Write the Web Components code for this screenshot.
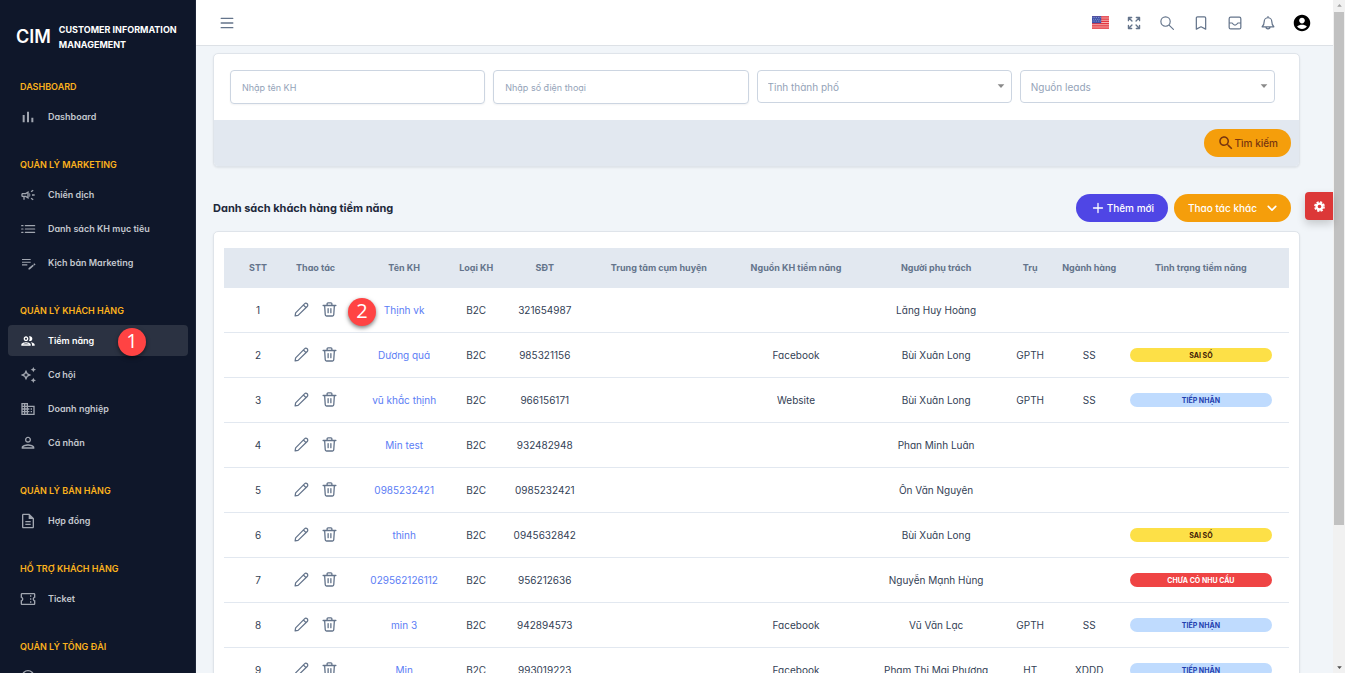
<!DOCTYPE html>
<html lang="vi">
<head>
<meta charset="utf-8">
<title>CIM - Khách hàng tiềm năng</title>
<style>
  body { margin: 0; font-family: Inter, "Open Sans", sans-serif; font-size: 10px; font-feature-settings: "cv11"; color: #334155; background: #f1f5f9; }
</style>
</head>
<body>
<cim-app></cim-app>
<script>
const fill = d => `<path fill="currentColor" fill-rule="evenodd" d="${d}"/>`;
const line = (d, w = 1.8) => `<path fill="none" stroke="currentColor" stroke-width="${w}" stroke-linecap="round" stroke-linejoin="round" d="${d}"/>`;
const ICONS = {
  bars: fill('M4 9h3v11H4zM17 13h3v7h-3zM10.500 4h3v16h-3z'),
  campaign: fill('M18 11v2h4v-2h-4zm-2 6.610c.96.71 2.210 1.650 3.200 2.390.4-.53.8-1.070 1.200-1.600-.99-.74-2.240-1.680-3.200-2.400-.4.54-.8 1.080-1.200 1.610zM20.400 5.600c-.4-.53-.8-1.070-1.200-1.600-.99.74-2.240 1.680-3.200 2.400.4.530.8 1.070 1.200 1.600.96-.72 2.210-1.650 3.200-2.400zM4 9c-1.100 0-2 .9-2 2v2c0 1.100.9 2 2 2h1v4h2v-4h1l5 3V6L8 9H4zm5.030 1.710L11 9.530v4.940l-1.970-1.180-.48-.29H4v-2h4.550l.48-.29zM15.500 12c0-1.330-.58-2.530-1.500-3.350v6.690c.92-.81 1.500-2.010 1.500-3.340z'),
  list: line('M8 7h14M8 12h14M8 17h14M2.500 7h2M2.500 12h2M2.500 17h2', 1.8),
  note: fill('M3 10h13v1.600H3zM3 6h13v1.600H3zM3 14h8v1.600H3zM21.400 12.200l1.900 1.900-1.500 1.500-1.900-1.900zM19 14.500l-6.300 5.400V21.800h1.900l6.300-5.500z'),
  people: fill('M9 13.750c-2.340 0-7 1.170-7 3.500V19h14v-1.750c0-2.330-4.660-3.500-7-3.500zM4.340 17c.84-.58 2.870-1.250 4.660-1.250s3.820.67 4.660 1.250H4.340zM9 12c1.930 0 3.500-1.570 3.500-3.500S10.930 5 9 5 5.500 6.570 5.500 8.500 7.070 12 9 12zm0-5c.83 0 1.500.67 1.500 1.500S9.830 10 9 10s-1.500-.67-1.500-1.500S8.170 7 9 7zm7.040 6.810c1.160.84 1.960 1.960 1.960 3.440V19h4v-1.750c0-2.020-3.500-3.170-5.960-3.440zM15 12c1.930 0 3.500-1.570 3.500-3.500S16.930 5 15 5c-.54 0-1.040.13-1.500.35.63.89 1 1.980 1 3.150s-.37 2.260-1 3.150c.46.22.96.35 1.500.35z'),
  sparkle: fill('M20 8l1.250-2.750L24 4l-2.750-1.250L20 0l-1.250 2.750L16 4l2.750 1.250zM20 16l-1.250 2.750L16 20l2.750 1.250L20 24l1.250-2.750L24 20l-2.750-1.250zM11.500 9.500L9 4 6.500 9.500 1 12l5.500 2.500L9 20l2.500-5.500L17 12zM9.990 12.990L9 15.170l-.99-2.180L5.830 12l2.180-.99L9 8.830l.99 2.180 2.180.99z'),
  building: fill('M12 7V3H2v18h20V7H12zM6 19H4v-2h2v2zm0-4H4v-2h2v2zm0-4H4V9h2v2zm0-4H4V5h2v2zm4 12H8v-2h2v2zm0-4H8v-2h2v2zm0-4H8V9h2v2zm0-4H8V5h2v2zm10 12h-8v-2h2v-2h-2v-2h2v-2h-2V9h8v10zm-2-8h-2v2h2v-2zm0 4h-2v2h2v-2z'),
  person: fill('M12 4.500c1.500 0 2.500 1 2.500 2.500s-1 2.500-2.500 2.500-2.500-1-2.500-2.500 1-2.500 2.500-2.500m0 11.500c3.500 0 6.800 1.200 7 2.500H5c.23-1.200 3.500-2.500 7-2.500m0-13.500C9.500 2.500 7.500 4.500 7.500 7s2 4.500 4.500 4.500 4.500-2 4.500-4.500-2-4.500-4.500-4.500zm0 11.500c-3.500 0-9.500 1.500-9.500 4.500v2h19v-2c0-3-6-4.500-9.500-4.500z'),
  doc: fill('M8 16h8v2H8zm0-4h8v2H8zm6-11H5c-1.100 0-2 .9-2 2v18c0 1.100.89 2 1.990 2H19c1.100 0 2-.9 2-2V8l-7-7zm5 20H5V3h8v6h6v12z'),
  ticket: fill('M23 10V5c0-1.110-.9-2-2-2H3c-1.100 0-1.990.89-1.990 2v5c1.100 0 1.990.9 1.990 2s-.89 2-2 2v5c0 1.100.9 2 2 2h18c1.100 0 2-.9 2-2v-5c-1.100 0-2-.9-2-2s.9-2 2-2zm-2-1.460c-1.190.69-2 1.990-2 3.460s.81 2.770 2 3.460V19H3v-3.540c1.190-.69 2-1.990 2-3.460 0-1.480-.8-2.770-1.990-3.460L3 5h18v3.540zM15 15.500h2v2h-2zm0-4.500h2v2h-2zm0-4.500h2v2h-2z'),
  headset: line('M3.500 16v-5a8.500 8.500 0 0 1 17 0v5M7 11a5.500 5.500 0 0 1 10 0M3 12v4h2v-4zM19 12v4h2v-4zM20 16c0 3-2 4.500-6 4.500', 2),
  menu: line('M2 4h20M2 12h20M2 20h20', 2.2),
  expand: line('M2.500 8V2.500h5.500M3 3l5.500 5.500M16 2.500h5.500v5.500M21 3l-5.500 5.500M2.500 16v5.500h5.500M3 21l5.500-5.500M21.500 16v5.500h-5.500M21 21l-5.500-5.500', 2.3),
  search: line('M23 23l-7.500-7.500M1.500 9.500a8 8 0 1 0 16 0a8 8 0 1 0-16 0', 2),
  bookmark: line('M4 22.500V3.500a2 2 0 0 1 2-2h12a2 2 0 0 1 2 2v19L12 18.500z', 2.1),
  inbox: line('M4.500 2h15a2.500 2.500 0 0 1 2.500 2.500v15a2.500 2.500 0 0 1-2.500 2.500h-15A2.500 2.500 0 0 1 2 19.500v-15A2.500 2.500 0 0 1 4.500 2zM2 12h5c1 0 1 3.500 5 3.500s4-3.500 5-3.500h5', 2.1),
  bell: line('M12 1v2M12 3a6.500 6.500 0 0 0-6.500 6.500c0 5-1 6.500-3.500 9h20C19.500 16 18.500 14.500 18.500 9.500A6.500 6.500 0 0 0 12 3zM8.500 18.500a3.500 3.500 0 0 0 7 0', 2.1),
  account: fill('M12 1C5.900 1 1 5.900 1 12s4.900 11 11 11 11-4.900 11-11S18.100 1 12 1zm0 4c2.100 0 3.800 1.700 3.800 3.800S14.100 12.600 12 12.600 8.200 10.900 8.200 8.800 9.900 5 12 5zm0 15c-2.700 0-5-1.400-6.500-3.400C6.800 15.200 9.700 14.300 12 14.300s5.200.9 6.500 2.300C17 18.600 14.700 20 12 20z'),
  find: fill('M15.500 14h-.79l-.28-.27C15.410 12.590 16 11.110 16 9.500 16 5.910 13.090 3 9.500 3S3 5.910 3 9.500 5.910 16 9.500 16c1.610 0 3.090-.59 4.230-1.570l.27.28v.79l5 4.990L20.490 19l-4.990-5zm-6 0C7.010 14 5 11.990 5 9.500S7.010 5 9.500 5 14 7.010 14 9.500 11.990 14 9.500 14z'),
  plus: line('M12 3v18M3 12h18', 2.6),
  down: line('M3 8l9 9 9-9', 4),
  caret: fill('M4 8h16l-8 9z'),
  gear: `<circle cx="12" cy="12" r="6.500" fill="none" stroke="currentColor" stroke-width="5"/><circle cx="12" cy="12" r="10" fill="none" stroke="currentColor" stroke-width="3.500" stroke-dasharray="4.850 3"/>`,
  pencil: line('M1.800 22.200l.8-4.700L16.800 2.900a2.900 2.900 0 0 1 4.300 4.300L6.500 21.400zM15 4.700l4.300 4.300', 2),
  trash: line('M1.800 5.600h20.400M4.200 5.600l1 14.900a2 2 0 0 0 2 1.900h9.600a2 2 0 0 0 2-1.900l1-14.900M8.200 5.500V2.900a1.400 1.400 0 0 1 1.400-1.400h4.800a1.400 1.400 0 0 1 1.400 1.400V5.500M9.800 10.500v6.500M14.200 10.500v6.500', 2.1),
  flag: `<path fill="#f6b3b3" d="M0 3h24v18H0z"/><path stroke="#e2363f" stroke-width="1.700" d="M0 4h24M0 7.200h24M0 10.400h24M0 13.600h24M0 16.800h24M0 20h24"/><path fill="#3f51a8" d="M0 3h13v10H0z"/><path stroke="#c5cdf0" stroke-width="1" stroke-dasharray="1 1.500" d="M1 5h11M2 7.500h10M1 10h11"/>`
};

class Base extends HTMLElement {
  connectedCallback() {
    if (this.shadowRoot) return;
    this.attachShadow({ mode: 'open' }).innerHTML = `<style>*{box-sizing:border-box}button,input,select{font:inherit;font-feature-settings:inherit;margin:0}button{cursor:pointer}</style>` + this.view();
  }
}
const define = (name, view) => customElements.define(name, class extends Base { view() { return view(this); } });

define('cim-icon', el => `
  <style>:host{display:inline-flex;flex:none;width:var(--size,14px);height:var(--size,14px)}svg{width:100%;height:100%;display:block}</style>
  <svg viewBox="0 0 24 24" aria-hidden="true">${ICONS[el.getAttribute('name')]}</svg>`);

define('cim-marker', () => `
  <style>:host{display:flex;align-items:center;justify-content:center;width:28px;height:28px;border-radius:50%;background:#ff4343;color:#fff;font:20px/26px "Open Sans",sans-serif;padding-bottom:2px;box-sizing:border-box;box-shadow:0 2px 4px rgba(0,0,0,.5)}</style>
  <slot></slot>`);

define('cim-nav-item', el => `
  <style>
    :host{display:block;position:relative}
    a{display:flex;align-items:center;gap:12px;height:31px;padding:0 12px;border-radius:4px;color:#c3c7ce;font-size:9px;font-weight:600;text-decoration:none;white-space:nowrap;--size:16px}
    cim-icon{color:#a1a6b0}
    :host([active]) a{background:#2b3242;color:#fff}
    :host([active]) cim-icon{color:#fff}
    ::slotted(cim-marker){position:absolute;left:110px;top:3px}
  </style>
  <a href="#" ${el.hasAttribute('label') ? `aria-label="${el.getAttribute('label')}"` : ''}><cim-icon name="${el.getAttribute('icon')}"></cim-icon><slot></slot></a><slot name="marker"></slot>`);

define('cim-nav-group', el => `
  <style>
    :host{display:block;margin-bottom:18px}
    h2{margin:0;padding:0 12px;height:29px;line-height:29px;font-size:9px;font-weight:600;color:#fbb21d;white-space:nowrap}
    div{display:flex;flex-direction:column;gap:3px}
  </style>
  <h2>${el.getAttribute('heading')}</h2><div><slot></slot></div>`);

define('cim-sidebar', () => `
  <style>
    :host{display:block;box-sizing:border-box;width:196px;flex:none;background:#0f172a;overflow:hidden;border-right:1px solid #1d2538}
    .brand{display:flex;align-items:center;gap:8px;height:72px;padding:0 16px;color:#fff;white-space:nowrap}
    .logo{font-size:18px;font-weight:600}
    .name{padding-top:2px;font-size:9px;line-height:15px;font-weight:700}
    nav{padding:0 7px 0 8px}
  </style>
  <div class="brand"><span class="logo">CIM</span><span class="name">CUSTOMER INFORMATION<br>MANAGEMENT</span></div>
  <nav>
    <cim-nav-group heading="DASHBOARD"><cim-nav-item icon="bars">Dashboard</cim-nav-item></cim-nav-group>
    <cim-nav-group heading="QUẢN LÝ MARKETING">
      <cim-nav-item icon="campaign">Chiến dịch</cim-nav-item>
      <cim-nav-item icon="list">Danh sách KH mục tiêu</cim-nav-item>
      <cim-nav-item icon="note">Kịch bản Marketing</cim-nav-item>
    </cim-nav-group>
    <cim-nav-group heading="QUẢN LÝ KHÁCH HÀNG">
      <cim-nav-item icon="people" active>Tiềm năng<cim-marker slot="marker">1</cim-marker></cim-nav-item>
      <cim-nav-item icon="sparkle">Cơ hội</cim-nav-item>
      <cim-nav-item icon="building">Doanh nghiệp</cim-nav-item>
      <cim-nav-item icon="person">Cá nhân</cim-nav-item>
    </cim-nav-group>
    <cim-nav-group heading="QUẢN LÝ BÁN HÀNG"><cim-nav-item icon="doc">Hợp đồng</cim-nav-item></cim-nav-group>
    <cim-nav-group heading="HỖ TRỢ KHÁCH HÀNG"><cim-nav-item icon="ticket">Ticket</cim-nav-item></cim-nav-group>
    <cim-nav-group heading="QUẢN LÝ TỔNG ĐÀI"><cim-nav-item icon="headset" label="Tổng đài"></cim-nav-item></cim-nav-group>
  </nav>`);

define('cim-topbar', () => `
  <style>
    :host{display:flex;align-items:center;justify-content:space-between;box-sizing:border-box;flex:none;height:46px;padding:0 17px;background:#fff;border-bottom:1px solid #dde1e6;color:#64748b}
    .tools{display:flex;justify-content:space-between;width:230px}
    button{display:flex;align-items:center;justify-content:center;width:28px;height:28px;padding:0;border:0;background:none;color:inherit;--size:14px}
    .flag{--size:17px}
    .user{color:#000;--size:18px}
  </style>
  <button aria-label="Menu"><cim-icon name="menu"></cim-icon></button>
  <div class="tools">
    <button class="flag" aria-label="Ngôn ngữ"><cim-icon name="flag"></cim-icon></button>
    <button aria-label="Toàn màn hình"><cim-icon name="expand"></cim-icon></button>
    <button aria-label="Tìm"><cim-icon name="search"></cim-icon></button>
    <button aria-label="Đánh dấu"><cim-icon name="bookmark"></cim-icon></button>
    <button aria-label="Hộp thư"><cim-icon name="inbox"></cim-icon></button>
    <button aria-label="Thông báo"><cim-icon name="bell"></cim-icon></button>
    <button class="user" aria-label="Tài khoản"><cim-icon name="account"></cim-icon></button>
  </div>`);

define('cim-card', () => `
  <style>:host{display:block;background:#fff;border:1px solid #dfe4ea;border-radius:5px;box-shadow:0 1px 2px rgba(15,23,42,.08);overflow:hidden}</style><slot></slot>`);

define('cim-button', () => `
  <style>
    :host{display:inline-block}
    button{display:flex;align-items:center;justify-content:center;gap:3px;height:28px;padding:0 14px;border:0;border-radius:14px;background:#f59e0b;color:#fff;font-weight:500;white-space:nowrap}
    :host([kind=search]) button{color:#78350f;gap:0;padding:0 13px;--size:18px}
    :host([kind=add]) button{background:#4f46e5;padding:0 14px 0 16px;--size:12px}
    :host([kind=more]) button{gap:10px;--size:10px}
  </style>
  <button><slot></slot></button>`);

define('cim-field', el => {
  const label = el.getAttribute('label');
  return `
  <style>
    :host{display:block;position:relative;min-width:0}
    input,select{display:block;width:100%;height:34px;padding:0 11px;border:1px solid #ccd5e1;border-radius:4px;background:#fff;color:#94a3b8;outline:0;appearance:none}
    input{font-size:9px;box-shadow:0 1px 2px rgba(15,23,42,.05)}
    input::placeholder{color:#94a3b8;opacity:1}
    select{height:33px;padding:0 10px}
    cim-icon{position:absolute;right:6px;top:11px;color:#8a8a8a;--size:10px;pointer-events:none}
  </style>` + (el.hasAttribute('select')
    ? `<select aria-label="${label}"><option>${label}</option></select><cim-icon name="caret"></cim-icon>`
    : `<input type="text" placeholder="${label}" aria-label="${label}">`);
});

define('cim-filter', () => `
  <style>
    :host{display:block}
    .fields{display:grid;grid-template-columns:repeat(4,1fr);gap:8px;padding:16px 24px 16px 16px}
    .foot{display:flex;justify-content:flex-end;padding:9px 8px;background:#e2e8f0}
  </style>
  <cim-card>
    <div class="fields">
      <cim-field label="Nhập tên KH"></cim-field>
      <cim-field label="Nhập số điện thoại"></cim-field>
      <cim-field select label="Tỉnh thành phố"></cim-field>
      <cim-field select label="Nguồn leads"></cim-field>
    </div>
    <div class="foot"><cim-button kind="search"><cim-icon name="find"></cim-icon>Tìm kiếm</cim-button></div>
  </cim-card>`);

define('cim-status', () => `
  <style>
    :host{display:block;box-sizing:border-box;height:14px;padding-top:1px;line-height:13px;border-radius:7px;font-size:7px;font-weight:700;text-align:center}
    :host([tone=warn]){background:#fde047;color:#422006}
    :host([tone=info]){background:#bfdbfe;color:#1e40af}
    :host([tone=bad]){background:#ef4444;color:#fff}
  </style><slot></slot>`);

const HEADS = [['STT', 52], ['Thao tác', 79], ['Tên KH', 98], ['Loại KH', 46], ['SĐT', 91], ['Trung tâm cụm huyện', 137], ['Nguồn KH tiềm năng', 137], ['Người phụ trách', 143], ['Trụ', 45], ['Ngành hàng', 73], ['Tình trạng tiềm năng', 163]];
const WARN = ['warn', 'SAI SỐ'], INFO = ['info', 'TIẾP NHẬN'], BAD = ['bad', 'CHƯA CÓ NHU CẦU'];
const LEADS = [
  ['Thịnh vk', '321654987', '', 'Lăng Huy Hoàng', '', ''],
  ['Dương quá', '985321156', 'Facebook', 'Bùi Xuân Long', 'GPTH', 'SS', WARN],
  ['vũ khắc thịnh', '966156171', 'Website', 'Bùi Xuân Long', 'GPTH', 'SS', INFO],
  ['Min test', '932482948', '', 'Phan Minh Luân', '', ''],
  ['0985232421', '0985232421', '', 'Ôn Văn Nguyên', '', ''],
  ['thinh', '0945632842', '', 'Bùi Xuân Long', '', '', WARN],
  ['029562126112', '956212636', '', 'Nguyễn Mạnh Hùng', '', '', BAD],
  ['min 3', '942894573', 'Facebook', 'Vũ Văn Lạc', 'GPTH', 'SS', INFO],
  ['Min', '993019223', 'Facebook', 'Phạm Thị Mai Phương', 'HT', 'XDDD', INFO]
];

define('cim-lead-table', () => `
  <style>
    :host{display:block;padding:16px 10px}
    table{width:100%;table-layout:fixed;border-collapse:separate;border-spacing:0}
    th,td{padding:0 0 2px;text-align:center;white-space:nowrap;vertical-align:middle}
    th{height:40px;box-sizing:border-box;background:#e2e8f0;color:#64748b;font-size:9px;font-weight:700}
    td{height:45px;padding-bottom:1px;border-bottom:1px solid #e2e8f0}
    th:first-child,td:first-child{padding-left:16px}
    td:last-child{padding:0 17px 1px 4px}
    th:last-child{padding-right:13px}
    a{color:#5b7df5;text-decoration:none}
    .acts{display:flex;justify-content:center;gap:13px;position:relative;color:#64748b}
    button{display:flex;padding:0;border:0;background:none;color:inherit;--size:15px}
    cim-marker{position:absolute;left:72px;top:-4px}
  </style>
  <table>
    <colgroup>${HEADS.map(h => `<col style="width:${h[1]}px">`).join('')}</colgroup>
    <thead><tr>${HEADS.map(h => `<th scope="col">${h[0]}</th>`).join('')}</tr></thead>
    <tbody>${LEADS.map((r, i) => `<tr><td>${i + 1}</td>
      <td><div class="acts"><button aria-label="Sửa"><cim-icon name="pencil"></cim-icon></button><button aria-label="Xóa"><cim-icon name="trash"></cim-icon></button>${i ? '' : '<cim-marker>2</cim-marker>'}</div></td>
      <td><a href="#">${r[0]}</a></td><td>B2C</td><td>${r[1]}</td><td></td><td>${r[2]}</td><td>${r[3]}</td><td>${r[4]}</td><td>${r[5]}</td>
      <td>${r[6] ? `<cim-status tone="${r[6][0]}">${r[6][1]}</cim-status>` : ''}</td></tr>`).join('')}</tbody>
  </table>`);

define('cim-scrollbar', () => `
  <style>
    :host{display:flex;flex-direction:column;align-items:center;flex:none;width:12px;background:#f1f1f1;color:#a3a3a3}
    i{flex:none;height:12px;display:flex;align-items:center;--size:7px}
    .up{transform:rotate(180deg)}
    .down{color:#505050}
    .track{flex:1;width:10px}
    .thumb{height:79%;background:#c1c1c1}
  </style>
  <i class="up"><cim-icon name="caret"></cim-icon></i><div class="track"><div class="thumb"></div></div><i class="down"><cim-icon name="caret"></cim-icon></i>`);

define('cim-app', () => `
  <style>
    :host{display:flex;height:100vh;overflow:hidden}
    main{display:flex;flex-direction:column;flex:1;min-width:0;position:relative}
    .content{flex:1;min-height:0;overflow:hidden;padding:7px 33px 0 17px}
    .title{display:flex;align-items:center;gap:6px;padding:27px 9px 9px 0}
    h1{flex:1;margin:0;font-size:11px;font-weight:700;color:#1e293b}
    .settings{position:absolute;right:0;top:192px;display:flex;align-items:center;justify-content:center;width:28px;height:28px;padding:0;border:0;border-radius:4px 0 0 4px;background:#dc3838;color:#fff;box-shadow:0 4px 8px rgba(0,0,0,.18);--size:11px}
  </style>
  <cim-sidebar></cim-sidebar>
  <main>
    <cim-topbar></cim-topbar>
    <div class="content">
      <cim-filter></cim-filter>
      <div class="title"><h1>Danh sách khách hàng tiềm năng</h1>
        <cim-button kind="add"><cim-icon name="plus"></cim-icon>Thêm mới</cim-button>
        <cim-button kind="more">Thao tác khác<cim-icon name="down"></cim-icon></cim-button>
      </div>
      <cim-card><cim-lead-table></cim-lead-table></cim-card>
    </div>
    <button class="settings" aria-label="Cài đặt"><cim-icon name="gear"></cim-icon></button>
  </main>
  <cim-scrollbar></cim-scrollbar>`);
</script>
</body>
</html>
